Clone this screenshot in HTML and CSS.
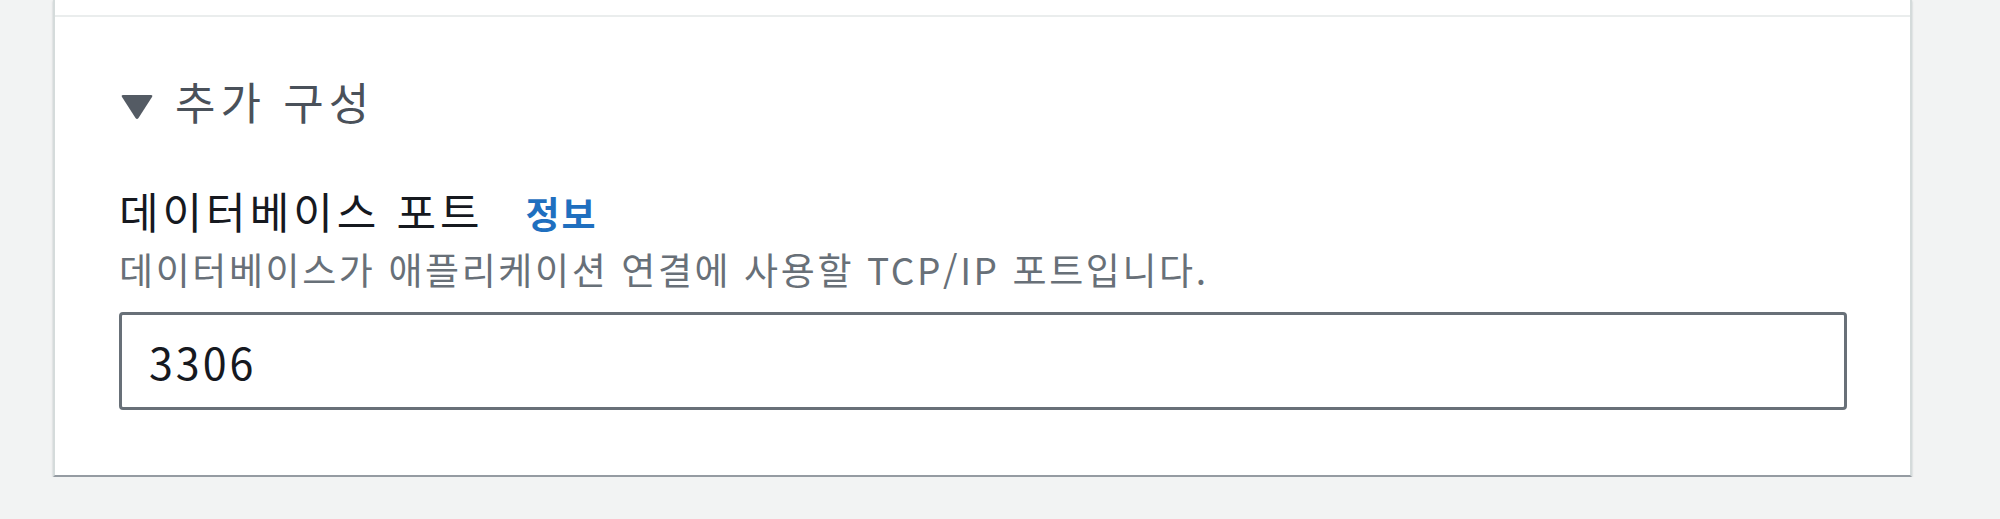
FILE: index.html
```html
<!DOCTYPE html>
<html lang="ko">
<head>
    <meta charset="UTF-8">
    <title>추가 구성</title>
    <link rel="stylesheet" href="styles.css">
</head>
<body>
    <div class="card">
        <div class="card-top"></div>
        <div class="section">
            <h2 class="section-title">
                <svg class="caret" width="32" height="26" viewBox="0 0 32 26">
                    <path d="M2 1 H30 Q32 1 31 3 L17.5 24 Q16 26 14.5 24 L1 3 Q0 1 2 1 Z" fill="#545b64"/>
                </svg>
                <span>추가 구성</span>
            </h2>
            <div class="field">
                <div class="label">데이터베이스 포트 <a href="#" class="info">정보</a></div>
                <div class="hint">데이터베이스가 애플리케이션 연결에 사용할 TCP/IP 포트입니다.</div>
                <input type="text" class="port" value="3306">
            </div>
        </div>
    </div>
</body>
</html>
```

FILE: styles.css
```css
body {
    margin: 0;
    background: #f2f3f3;
    font-family: "Noto Sans CJK KR", "Noto Sans", sans-serif;
}
.card {
    margin: 0 88px 0 53px;
    background: #fff;
    border-left: 2px solid #d5dbdb;
    border-right: 2px solid #d5dbdb;
    border-bottom: 2px solid #959ba2;
    box-shadow: 0 1px 2px rgba(0, 28, 36, 0.2);
}
.card-top {
    height: 15px;
    border-bottom: 2px solid #eaeded;
}
.section {
    padding: 57px 63px 65px 64px;
}
.section-title {
    display: flex;
    align-items: center;
    margin: 0;
    font-size: 44px;
    line-height: 54px;
    font-weight: normal;
    letter-spacing: 5px;
    color: #4a515a;
}
.caret {
    margin: 12px 22px 0 2px;
}
.field {
    margin-top: 56px;
}
.label {
    font-size: 43px;
    line-height: 52px;
    letter-spacing: 4px;
    color: #16191f;
}
.info {
    margin-left: 26px;
    font-size: 37px;
    font-weight: bold;
    letter-spacing: 2px;
    color: #1f6fbf;
    text-decoration: none;
}
.hint {
    margin-top: 8px;
    font-size: 37px;
    line-height: 44px;
    letter-spacing: 2.6px;
    color: #687078;
}
.port {
    display: block;
    box-sizing: border-box;
    width: 100%;
    height: 98px;
    margin-top: 21px;
    padding: 0 27px;
    border: 3px solid #687078;
    border-radius: 4px;
    font-family: "Noto Sans CJK KR", "Noto Sans", sans-serif;
    font-size: 43px;
    color: #16191f;
    letter-spacing: 3px;
}
```
